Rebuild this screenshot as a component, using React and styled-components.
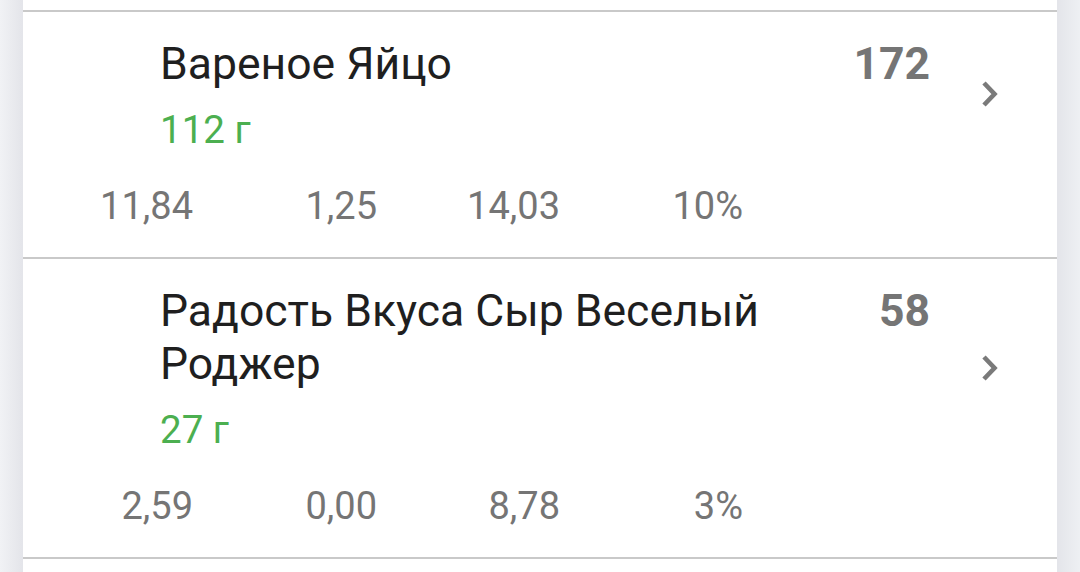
import React from "react";
import styled, { createGlobalStyle } from "styled-components";

const GlobalStyle = createGlobalStyle`
  html, body {
    margin: 0;
    padding: 0;
    background: #e8e9ed;
  }
  body {
    font-family: Roboto, "Noto Sans", sans-serif;
    -webkit-font-smoothing: antialiased;
  }
`;

const Page = styled.div`
  width: 1080px;
  height: 572px;
  overflow: hidden;
  display: flex;
  justify-content: center;
  background: linear-gradient(
    to right,
    #f1f2f5 0px,
    #e4e5ea 22px,
    #e4e5ea 1058px,
    #eef0f3 1080px
  );
`;

const Card = styled.div`
  width: 1034px;
  background: #ffffff;
  padding-top: 10px;
  display: flex;
  flex-direction: column;
`;

const Row = styled.div`
  border-top: 2px solid #c9c9c9;
  display: flex;
  flex-direction: column;
`;

const TopSection = styled.div`
  display: flex;
  align-items: center;
`;

const Info = styled.div`
  flex: 1;
  min-width: 0;
  padding: 26px 0 20px 137px;
  display: flex;
  flex-direction: column;
  gap: 12px;
`;

const Title = styled.div`
  font-size: 44.5px;
  line-height: 53px;
  color: #1f1f1f;
`;

const Grams = styled.div`
  font-size: 38.5px;
  line-height: 53px;
  color: #4caf50;
`;

const Calories = styled.div`
  align-self: flex-start;
  margin-top: 26px;
  width: 120px;
  text-align: right;
  font-size: 44.5px;
  line-height: 53px;
  font-weight: 700;
  color: #757575;
`;

const Chevron = styled.svg`
  width: 16px;
  height: 28px;
  margin-left: 52px;
  margin-right: 59px;
  flex-shrink: 0;
  fill: none;
  stroke: #7a7a7a;
  stroke-width: 4.6;
  stroke-linejoin: miter;
  stroke-linecap: butt;
`;

const Stats = styled.div`
  display: grid;
  grid-template-columns: 170px 184px 183px 183px;
  padding: 8px 0 29px 0;
`;

const Stat = styled.div`
  text-align: right;
  font-size: 38px;
  line-height: 44px;
  color: #757575;
`;

const items = [
  {
    name: "Вареное Яйцо",
    grams: "112 г",
    kcal: "172",
    stats: ["11,84", "1,25", "14,03", "10%"],
  },
  {
    name: "Радость Вкуса Сыр Веселый Роджер",
    grams: "27 г",
    kcal: "58",
    stats: ["2,59", "0,00", "8,78", "3%"],
  },
];

function ChevronIcon() {
  return (
    <Chevron viewBox="0 0 16 28" aria-hidden="true">
      <polyline points="2,3 12.5,14 2,25" />
    </Chevron>
  );
}

export default function App() {
  return (
    <>
      <GlobalStyle />
      <Page>
        <Card>
          {items.map((item) => (
            <Row key={item.name}>
              <TopSection>
                <Info>
                  <Title>{item.name}</Title>
                  <Grams>{item.grams}</Grams>
                </Info>
                <Calories>{item.kcal}</Calories>
                <ChevronIcon />
              </TopSection>
              <Stats>
                {item.stats.map((s, i) => (
                  <Stat key={i}>{s}</Stat>
                ))}
              </Stats>
            </Row>
          ))}
          <Row />
        </Card>
      </Page>
    </>
  );
}
